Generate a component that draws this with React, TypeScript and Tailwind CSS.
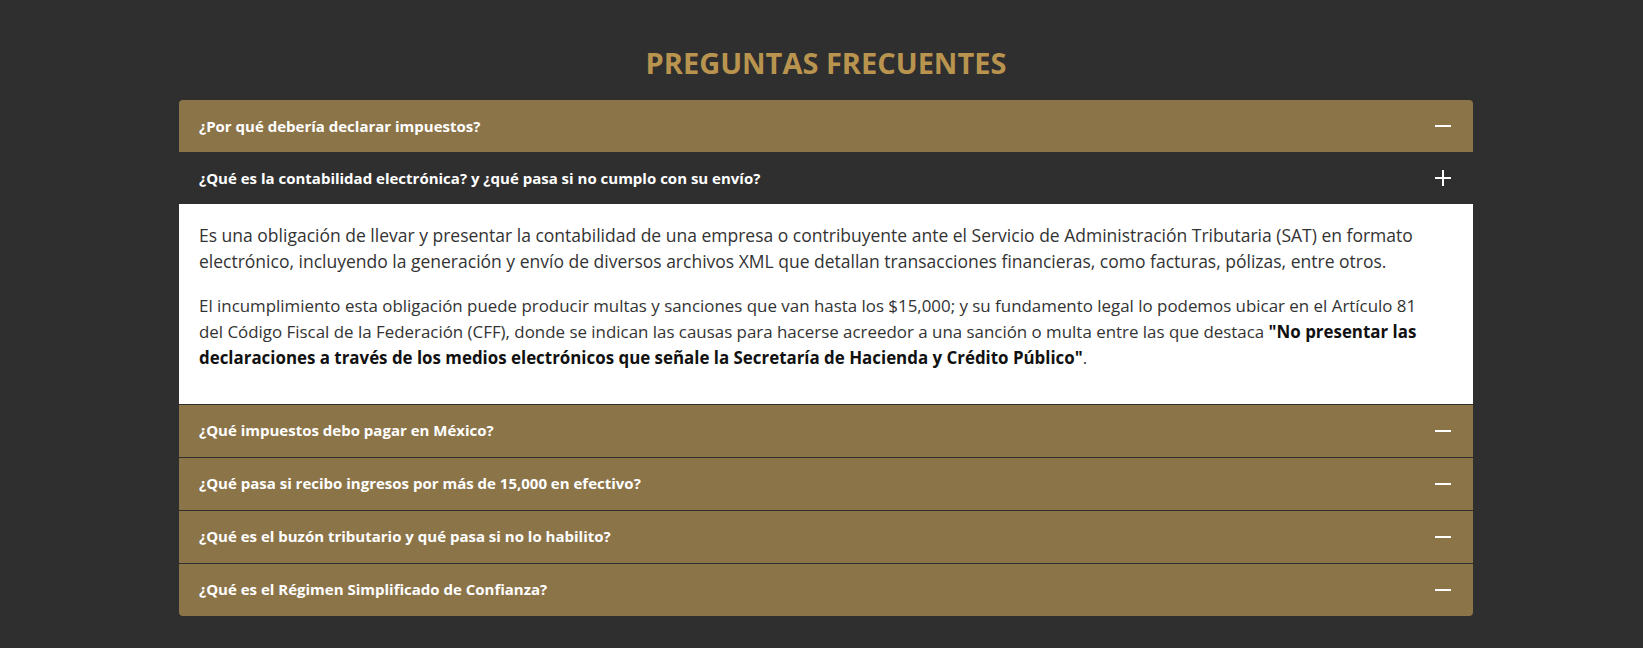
const faqs = [
  { q: '¿Por qué debería declarar impuestos?', open: false },
  { q: '¿Qué es la contabilidad electrónica? y ¿qué pasa si no cumplo con su envío?', open: true },
  { q: '¿Qué impuestos debo pagar en México?', open: false },
  { q: '¿Qué pasa si recibo ingresos por más de 15,000 en efectivo?', open: false },
  { q: '¿Qué es el buzón tributario y qué pasa si no lo habilito?', open: false },
  { q: '¿Qué es el Régimen Simplificado de Confianza?', open: false },
];

function Minus() {
  return <span className="block h-[2px] w-4 bg-white" />;
}

function Plus() {
  return (
    <span className="relative block h-4 w-4">
      <span className="absolute left-0 top-[7px] h-[2px] w-4 bg-white" />
      <span className="absolute left-[7px] top-0 h-4 w-[2px] bg-white" />
    </span>
  );
}

export default function App() {
  return (
    <div className="min-h-[648px] bg-[#2f2f2f] pt-[38px] font-['Open_Sans',sans-serif]">
      <div className="ml-[179px] w-[1294px]">
        {/* Title */}
        <h2 className="mb-[13px] text-center text-[29px] font-bold leading-[49px] text-[#b9944f]">
          PREGUNTAS FRECUENTES
        </h2>

        {/* Accordion */}
        <div className="overflow-hidden rounded-[4px]">
          {faqs.map((f, i) => (
            <div key={i} className={i > 1 ? 'border-t border-[#2f2f2f]' : ''}>
              <div
                className={`flex h-[52px] items-center justify-between pl-5 pr-[22px] ${
                  f.open ? 'bg-[#2f2f2f]' : 'bg-[#8c7449]'
                }`}
              >
                <span className="text-[15px] font-bold text-white">{f.q}</span>
                {f.open ? <Plus /> : <Minus />}
              </div>
              {f.open && (
                <div className="bg-white pb-[17px] pl-5 pr-4 pt-[19px] leading-[25.7px] text-[#333]">
                  <p className="mb-[19px] text-[17.5px]">
                    Es una obligación de llevar y presentar la contabilidad de una empresa o contribuyente ante el
                    Servicio de Administración Tributaria (SAT) en formato electrónico, incluyendo la generación y envío
                    de diversos archivos XML que detallan transacciones financieras, como facturas, pólizas, entre otros.
                  </p>
                  <p className="mb-4 text-[16.9px]">
                    El incumplimiento esta obligación puede producir multas y sanciones que van hasta los $15,000; y su
                    fundamento legal lo podemos ubicar en el Artículo 81
                    <br />
                    del Código Fiscal de la Federación (CFF), donde se indican las causas para hacerse acreedor a una
                    sanción o multa entre las que destaca{' '}
                    <strong className="font-bold text-[#111]">
                      "No presentar las declaraciones a través de los medios electrónicos que señale la Secretaría de
                      Hacienda y Crédito Público"
                    </strong>
                    .
                  </p>
                </div>
              )}
            </div>
          ))}
        </div>
      </div>
    </div>
  );
}
